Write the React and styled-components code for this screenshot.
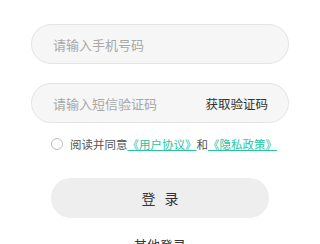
import React from 'react'
import styled, { createGlobalStyle } from 'styled-components';

const Global = createGlobalStyle`
  html, body {
    margin: 0;
    padding: 0;
    background: #ffffff;
    font-family: "Noto Sans CJK SC", "Noto Sans", sans-serif;
    overflow: hidden;
  }
`;

const Login = () => {
    return (
        <Main>
            <Global />
            <Field>
                <Input placeholder="请输入手机号码" />
            </Field>
            <Field gap={19}>
                <Input placeholder="请输入短信验证码" />
                <CodeButton>获取验证码</CodeButton>
            </Field>
            <Agree>
                <Radio />
                <span>阅读并同意</span>
                <Link>《用户协议》</Link>
                <span>和</span>
                <Link>《隐私政策》</Link>
            </Agree>
            <Submit>登&nbsp;录</Submit>
            <Other>其他登录</Other>
        </Main>
    )
};

const Main = styled.section`
  display: flex;
  flex-direction: column;
  align-items: center;
  padding-top: 24px;
  & > * {
    flex-shrink: 0;
  }
`;

const Field = styled.div`
  width: 258px;
  height: 40px;
  box-sizing: border-box;
  margin-top: ${p => p.gap || 0}px;
  border: 1px solid #e4e4e4;
  border-radius: 20px;
  background: #f6f6f6;
  display: flex;
  align-items: center;
  padding: 0 20px 0 21px;
`;

const Input = styled.input`
  flex: 1;
  min-width: 0;
  border: none;
  outline: none;
  background: transparent;
  font-family: inherit;
  font-size: 13px;
  color: #333;
  padding: 0;
  &::placeholder {
    color: #a8a8a8;
  }
`;

const CodeButton = styled.span`
  font-size: 12.5px;
  color: #333;
  white-space: nowrap;
`;

const Agree = styled.div`
  margin-top: 14px;
  display: flex;
  align-items: center;
  font-size: 11.5px;
  color: #555;
  line-height: 14px;
  margin-left: 8px;
`;

const Radio = styled.span`
  width: 10px;
  height: 10px;
  border: 1px solid #bbb;
  border-radius: 50%;
  margin-right: 7px;
`;

const Link = styled.span`
  color: #2ac3a2;
  text-decoration: underline;
`;

const Submit = styled.button`
  margin-top: 27px;
  width: 218px;
  height: 40px;
  border: none;
  border-radius: 20px;
  background: #eeeeee;
  font-family: inherit;
  font-size: 14px;
  color: #333;
  letter-spacing: 3px;
  padding: 0 0 0 3px;
`;

const Other = styled.div`
  margin-top: 17px;
  font-size: 13px;
  color: #333;
`;

export default Login;
